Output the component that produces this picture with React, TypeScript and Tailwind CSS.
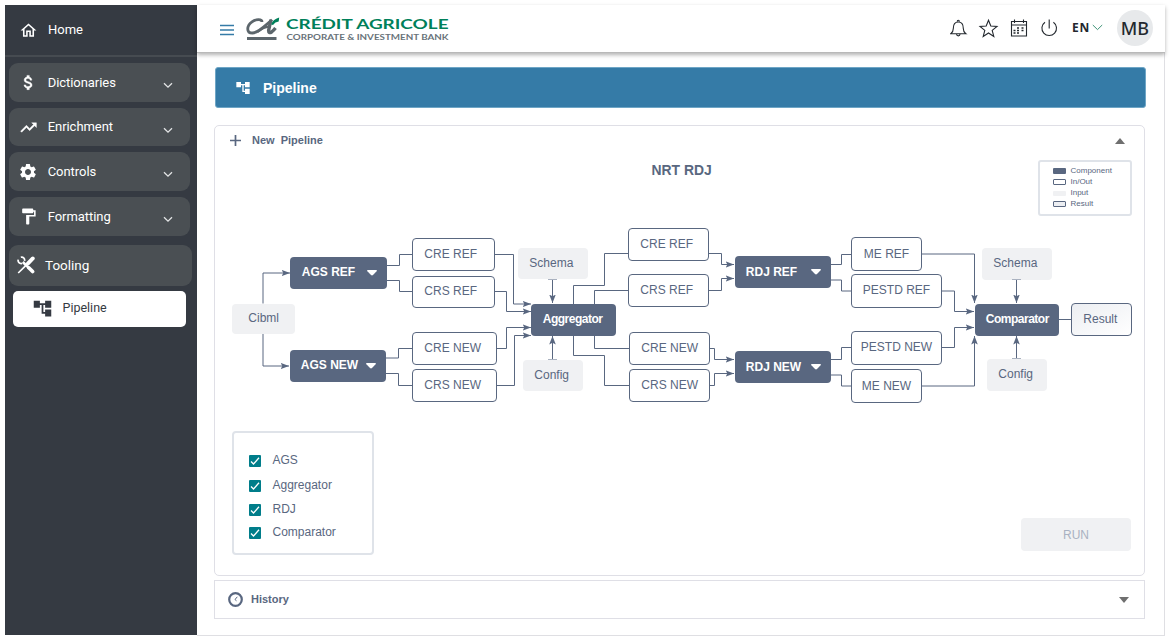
import type { ReactNode } from "react";
import { MdAccountTree, MdFormatPaint, MdOutlineHome, MdSettings } from "react-icons/md";

type Kind = "component" | "inout" | "input" | "result";

interface DiagramNode {
  label: string;
  kind: Kind;
  x: number;
  y: number;
  w: number;
  h: number;
  textX: number;
  baseline: number;
  tight?: boolean;
  caretX?: number;
}

// Origin of the diagram canvas in page units.
const OX = 215;
const OY = 216;

const nodes: DiagramNode[] = [
  { label: "Cibml", kind: "input", x: 231.5, y: 303.5, w: 63, h: 30.5, textX: 248, baseline: 322 },
  { label: "AGS REF", kind: "component", x: 290, y: 257, w: 97, h: 32, textX: 301.5, baseline: 276, caretX: 367 },
  { label: "AGS NEW", kind: "component", x: 289.5, y: 350, w: 96.5, h: 32, textX: 300.5, baseline: 369, caretX: 366 },
  { label: "CRE REF", kind: "inout", x: 412, y: 238, w: 83, h: 33, textX: 424, baseline: 258 },
  { label: "CRS REF", kind: "inout", x: 412, y: 275.5, w: 83, h: 32.5, textX: 424, baseline: 295 },
  { label: "CRE NEW", kind: "inout", x: 412, y: 332, w: 85, h: 33, textX: 424, baseline: 352 },
  { label: "CRS NEW", kind: "inout", x: 412, y: 369, w: 85, h: 33, textX: 424, baseline: 389 },
  { label: "Schema", kind: "input", x: 517.5, y: 247.5, w: 70, h: 31.5, textX: 529, baseline: 267 },
  { label: "Aggregator", kind: "component", x: 531, y: 303.5, w: 85, h: 32, textX: 542.5, baseline: 323, tight: true },
  { label: "Config", kind: "input", x: 522.5, y: 359.5, w: 60, h: 31.5, textX: 534, baseline: 379 },
  { label: "CRE REF", kind: "inout", x: 628, y: 228, w: 81, h: 33, textX: 640, baseline: 248 },
  { label: "CRS REF", kind: "inout", x: 628, y: 274, w: 81, h: 33, textX: 640, baseline: 294 },
  { label: "CRE NEW", kind: "inout", x: 629, y: 332, w: 81, h: 33, textX: 641, baseline: 352 },
  { label: "CRS NEW", kind: "inout", x: 629, y: 369, w: 81, h: 33, textX: 641, baseline: 389 },
  { label: "RDJ REF", kind: "component", x: 734.5, y: 256, w: 96, h: 32, textX: 745.5, baseline: 276, caretX: 811 },
  { label: "RDJ NEW", kind: "component", x: 734.5, y: 351, w: 96, h: 32, textX: 745.5, baseline: 371, caretX: 811 },
  { label: "ME REF", kind: "inout", x: 851, y: 237, w: 71, h: 34, textX: 863.5, baseline: 258 },
  { label: "PESTD REF", kind: "inout", x: 851, y: 274, w: 91, h: 34, textX: 862.5, baseline: 294 },
  { label: "PESTD NEW", kind: "inout", x: 851, y: 330.5, w: 91, h: 34, textX: 860.5, baseline: 351 },
  { label: "ME NEW", kind: "inout", x: 851, y: 369, w: 71, h: 34, textX: 861.5, baseline: 390 },
  { label: "Schema", kind: "input", x: 981.5, y: 248, w: 70, h: 32, textX: 993, baseline: 267 },
  { label: "Comparator", kind: "component", x: 974.5, y: 303.5, w: 84, h: 32, textX: 985.5, baseline: 323, tight: true },
  { label: "Config", kind: "input", x: 986.5, y: 359, w: 60, h: 31.5, textX: 998, baseline: 378 },
  { label: "Result", kind: "result", x: 1071, y: 303, w: 61, h: 33, textX: 1083, baseline: 323 },
];

const kindClass: Record<Kind, string> = {
  component: "bg-[#596780] text-white font-bold",
  inout: "bg-white border border-[#596780] text-[#596780]",
  input: "bg-[#f0f1f3] text-[#596780]",
  result: "bg-linear-to-br from-[#eceef2] to-white border border-[#596780] text-[#596780]",
};

const plainEdges = [
  "M387 265.5H399.5V254.5H412",
  "M387 280.5H399.5V291.5H412",
  "M386 358H398.5V348.5H412",
  "M386 373.5H398.5V385.5H412",
  "M573.5 304V285.5H604.5V253.5H628",
  "M594.5 304V290.5H628",
  "M594.5 335V348.5H629",
  "M573.5 335V355.5H604.5V385.5H629",
  "M830 264.5H841.5V254.5H851",
  "M830 280H841.5V291H851",
  "M830 359.5H841.5V347.5H851",
  "M830 375H841.5V386H851",
  "M1058 319.5H1071",
];

const capEdges = ["M548 279.5H557", "M548 359.5H557", "M1012 279.5H1021", "M1012 358.5H1021"];

const arrowEdges = [
  "M263 303.5V273H290",
  "M263 334V366H289",
  "M495 254.5H513.5V304H531",
  "M495 291.5H506.5V311.5H531",
  "M497 348.5H506.5V327.5H531",
  "M497 385.5H514.5V335.5H531",
  "M552.5 279V303",
  "M552.5 359V336",
  "M709 253.5H721.5V264.5H734",
  "M709 290.5H721.5V278.5H734",
  "M710 348.5H714.5V359.5H734",
  "M710 385.5H714.5V373.5H734",
  "M922 254H974.5V303",
  "M942 291H954.5V311.5H974",
  "M942 347.5H954.5V327.5H974",
  "M922 386H974.5V336",
  "M1016.5 279V303",
  "M1016.5 359V336",
];

function NodeBox({ node }: { node: DiagramNode }) {
  const bordered = node.kind === "inout" || node.kind === "result" ? 1 : 0;
  return (
    <div
      className={`absolute rounded-[4px] text-[12px] leading-[16px] whitespace-nowrap ${kindClass[node.kind]} ${
        node.tight ? "tracking-[-0.5px]" : ""
      }`}
      style={{
        left: node.x - OX,
        top: node.y - OY,
        width: node.w,
        height: node.h,
        paddingLeft: node.textX + 0.3 - node.x - bordered,
        paddingTop: node.baseline - 12 - node.y - bordered,
      }}
    >
      {node.label}
      {node.caretX !== undefined && (
        <svg
          className="absolute"
          style={{ left: node.caretX + 0.3 - node.x, top: 13 }}
          width="10"
          height="6"
          viewBox="0 0 10 6"
        >
          <path d="M.6 0h8.8q.8.5.2 1.3L6 5q-1 .9-2 0L.4 1.3Q-.2.5.6 0z" fill="#fff" />
        </svg>
      )}
    </div>
  );
}

function Diagram() {
  return (
    <div className="relative h-[215px]">
      <svg className="absolute inset-0" width="929" height="215" viewBox="215 216 929 215">
        <defs>
          <marker id="arrow" markerUnits="userSpaceOnUse" markerWidth="9" markerHeight="8" refX="8.5" refY="4" orient="auto">
            <path d="M0 .7 8.5 4 0 7.3 1.8 4z" fill="#596780" />
          </marker>
        </defs>
        <g fill="none" stroke="#596780" strokeWidth="1">
          {plainEdges.map((d) => (
            <path key={d} d={d} />
          ))}
          {arrowEdges.map((d) => (
            <path key={d} d={d} markerEnd="url(#arrow)" />
          ))}
        </g>
      </svg>
      {nodes.map((n) => (
        <NodeBox key={`${n.label}-${n.x}-${n.y}`} node={n} />
      ))}
      <svg className="absolute inset-0" width="929" height="215" viewBox="215 216 929 215">
        {capEdges.map((d) => (
          <path key={d} d={d} stroke="#aab2c0" />
        ))}
      </svg>
    </div>
  );
}

function Chevron() {
  return (
    <svg width="10" height="7" viewBox="0 0 10 7" fill="none" stroke="#e3e5e6" strokeWidth="1.3">
      <path d="M1 1.2 5 5.2 9 1.2" />
    </svg>
  );
}

function BoldIcon({ d, size, weight }: { d: string; size: number; weight: number }) {
  return (
    <svg width={size} height={size} viewBox="0 0 24 24" fill="#fff" stroke="#fff" strokeWidth={weight} className="shrink-0">
      <path d={d} />
    </svg>
  );
}

const DOLLAR =
  "M11.8 10.9c-2.27-.59-3-1.2-3-2.15 0-1.09 1.01-1.85 2.7-1.85 1.78 0 2.44.85 2.5 2.1h2.21c-.07-1.72-1.12-3.3-3.21-3.81V3h-3v2.16c-1.94.42-3.5 1.68-3.5 3.61 0 2.31 1.91 3.46 4.7 4.13 2.5.6 3 1.48 3 2.41 0 .69-.49 1.79-2.7 1.79-2.06 0-2.87-.92-2.98-2.1h-2.2c.12 2.19 1.76 3.42 3.68 3.83V21h3v-2.15c1.95-.37 3.5-1.5 3.5-3.55 0-2.84-2.43-3.81-4.7-4.4z";
const TREND = "M16 6l2.29 2.29-4.88 4.88-4-4L2 16.59 3.41 18l6-6 4 4 6.3-6.29L22 12V6z";

function ToolsIcon() {
  return (
    <svg width="18" height="18" viewBox="0 0 18 18" fill="none" stroke="#fff">
      <path d="M1.200 3.600C.6 6 2.600 8 5 7.400M3.800 1.300C6 .6 8 2.400 7.600 4.800" strokeWidth="1.700" />
      <path d="M5.800 6 12.500 12.700" strokeWidth="2.600" />
      <path d="M11.800 11.800 15.600 15.600" strokeWidth="3.600" strokeLinecap="round" />
      <path d="M15.800 2.400 10.800 7.600" strokeWidth="3.800" strokeLinecap="round" />
      <path d="M10.500 7.800 1.200 17" strokeWidth="1.700" />
    </svg>
  );
}

function MenuItem({ icon, label }: { icon: ReactNode; label: string }) {
  return (
    <div className="flex h-[38.7px] items-center rounded-[9px] bg-[#4a4f53] pr-[17px] pl-[10px]">
      <span className="flex w-[18px] justify-center">{icon}</span>
      <span className="ml-[10.7px] flex-1 text-[13px] tracking-[-0.05px]">{label}</span>
      <span className="pt-[6px]">
        <Chevron />
      </span>
    </div>
  );
}

function Sidebar() {
  return (
    <aside className="h-[630px] w-[192px] shrink-0 bg-[#353a42] font-['Roboto',sans-serif] text-white">
      <div className="flex h-[52px] items-center border-b-2 border-[#464b51] pl-[14px]">
        <MdOutlineHome size={19} />
        <span className="ml-[10px] text-[13px]">Home</span>
      </div>
      <nav className="pt-[6px] pl-[4px]">
        <div className="flex w-[181px] flex-col gap-[6px]">
          <MenuItem icon={<BoldIcon d={DOLLAR} size={19} weight={0.5} />} label="Dictionaries" />
          <MenuItem icon={<BoldIcon d={TREND} size={19} weight={0.5} />} label="Enrichment" />
          <MenuItem icon={<MdSettings size={20} className="shrink-0" />} label="Controls" />
          <MenuItem icon={<MdFormatPaint size={19} className="shrink-0" />} label="Formatting" />
        </div>
        <div className="mt-[9px] flex h-[41px] w-[183px] items-center rounded-[9px] bg-[#4a4f53] pl-[8px]">
          <ToolsIcon />
          <span className="ml-[10px] text-[13.5px]">Tooling</span>
        </div>
        <div className="mt-[5px] ml-[4px] flex h-[36px] w-[173px] items-center rounded-[5px] bg-white pb-[1px] pl-[19px] text-[#353a42]">
          <MdAccountTree size={21} className="mt-[1px]" />
          <span className="ml-[9.5px] text-[12.5px]">Pipeline</span>
        </div>
      </nav>
    </aside>
  );
}

function Logo() {
  return (
    <svg width="204" height="30" viewBox="245 13 204 30">
      <g fill="none" stroke="#5c666c">
        <path d="M262 22C262 19 256 19 252 21.800C246.500 25.800 246 33 252.500 33C258 33 263.500 27 272 19.800" strokeWidth="2.800" />
        <path d="M271 19.600 268.600 30.500Q268.600 33.800 271.600 32Q273.700 30.300 275.500 28" strokeWidth="3.400" />
        <path d="M257.500 32Q263 26.600 271 26.600" strokeWidth="2.200" />
      </g>
      <path d="M271.200 24.600Q272.500 19.400 279.200 17.500L278.700 21.500Q275 22 273 24.900z" fill="#00805a" />
      <path d="M247 37h29.500v3H247z" fill="#5c666c" />
      <text x="286" y="29.200" textLength="162.500" lengthAdjust="spacingAndGlyphs" fontFamily="Lato, sans-serif" fontWeight="700" fontSize="13.500" fill="#00805a">
        CRÉDIT AGRICOLE
      </text>
      <text x="286.500" y="40" textLength="162" lengthAdjust="spacingAndGlyphs" fontFamily="Lato, sans-serif" fontWeight="700" fontSize="8.200" fill="#69737a">
        CORPORATE &amp; INVESTMENT BANK
      </text>
    </svg>
  );
}

function HeaderIcons() {
  return (
    <svg width="108" height="20" viewBox="950 18 108 20" fill="none" stroke="#23282e" strokeWidth="1.1">
      <path d="M950.800 33.700h15q-2.500-1.700-2.500-5.200c0-4.500-1.500-6.500-5-6.500s-5 2-5 6.500q0 3.500-2.500 5.200zM957.200 21.500q0-1.200 1.100-1.200t1.100 1.200M956.500 34q.2 1.900 1.800 1.900t1.800-1.900" />
      <path d="M988.500 20.200l2.300 5.800 6.200.4-4.800 4 1.600 6-5.300-3.400-5.300 3.400 1.600-6-4.800-4 6.200-.4z" />
      <path d="M1011.500 21.500h15v14.500h-15zM1011.500 25h15M1014.500 19.500v3.500M1023.500 19.500v3.500" />
      <path d="M1017 28h2m2.500 0h2M1013.500 30.500h2m1.500 0h2m2.500 0h2M1013.500 33h2m1.500 0h2" strokeWidth="1.700" />
      <path d="M1045 22.300a7.300 7.300 0 1 0 8.400 0M1049.200 19.500v9" />
    </svg>
  );
}

function Header() {
  return (
    <header className="relative z-10 flex h-[48px] items-center border-b border-[#b9b9b9] bg-white pl-[23px] shadow-[0_2px_4px_rgba(0,0,0,0.3)]">
      <svg width="14" height="12" viewBox="0 0 14 12" className="mt-[2px] shrink-0">
        <path d="M0 1.500h14M0 6h14M0 10.500h14" stroke="#357ba7" strokeWidth="1.300" />
      </svg>
      <div className="ml-[11px] pb-[2px]">
        <Logo />
      </div>
      <div className="ml-auto flex items-center pr-[12px] pb-[1px]">
        <span className="pb-[1px]">
          <HeaderIcons />
        </span>
        <span className="ml-[14px] pb-[1px] font-['Open_Sans',sans-serif] text-[12px] font-bold tracking-[0.7px] text-[#23282e]">EN</span>
        <svg width="11" height="7" viewBox="0 0 11 7" className="mb-[1px] ml-[2px]" fill="none" stroke="#3f9377">
          <path d="M.8 1 5.500 5.600 10.200 1" />
        </svg>
        <span className="ml-[14px] flex size-[36px] items-center justify-center rounded-full bg-[#e7e9eb] font-['Noto_Sans',sans-serif] text-[18px] font-medium text-[#23282e]">
          MB
        </span>
      </div>
    </header>
  );
}

function Legend() {
  const rows = [
    { label: "Component", swatch: "h-[6px] bg-[#596780]" },
    { label: "In/Out", swatch: "h-[6px] border border-[#596780]" },
    { label: "Input", swatch: "h-[5px] bg-[#f0f1f3]" },
    { label: "Result", swatch: "h-[6px] border border-[#596780] bg-[#eceef2]" },
  ];
  return (
    <div className="mt-[4px] h-[56px] w-[94px] rounded-[3px] border-2 border-[#dfe3e9] pt-[3px] pl-[13px]">
      {rows.map((r) => (
        <div key={r.label} className="flex h-[11px] items-center">
          <span className={`mt-[1px] w-[13px] rounded-[1px] ${r.swatch}`} />
          <span className="ml-[4.5px] text-[8px] leading-[11px]">{r.label}</span>
        </div>
      ))}
    </div>
  );
}

function CheckList() {
  const items = [
    { label: "AGS", gap: "mt-[19px]" },
    { label: "Aggregator", gap: "mt-[9px]" },
    { label: "RDJ", gap: "mt-[8px]" },
    { label: "Comparator", gap: "mt-[7px]" },
  ];
  return (
    <div className="h-[124px] w-[142px] rounded-[4px] border-2 border-[#dfe3e9] pl-[15px]">
      {items.map((item) => (
        <div key={item.label} className={`flex h-[16px] items-center ${item.gap}`}>
          <svg width="12" height="12" viewBox="0 0 12 12" className="mt-[1px]">
            <rect width="12" height="12" rx="1" fill="#007d8a" />
            <path d="M2 6.500 4.500 9 10 2.800" fill="none" stroke="#fff" strokeWidth="1.300" />
          </svg>
          <span className="ml-[12px] text-[12px] leading-[16px]">{item.label}</span>
        </div>
      ))}
    </div>
  );
}

export default function App() {
  return (
    <div className="flex h-[642px] w-[1171px] overflow-hidden bg-white pt-[5px] pl-[5px] font-['Liberation_Sans',Arial,sans-serif] text-[#596780]">
      <Sidebar />
      <div className="flex h-[631px] w-[968px] flex-col">
        <Header />
        <main className="flex flex-1 flex-col border-r border-b border-[#dfdfe3] pt-[14px] pr-[18px] pl-[17px]">
          <div className="ml-[1px] flex h-[41px] w-[931px] shrink-0 items-center rounded-[3px] border border-[#6fa6c6] bg-[#357ba7] pl-[19px] text-white">
            <MdAccountTree size={16} />
            <span className="ml-[12px] text-[14px] leading-[16px] font-bold">Pipeline</span>
          </div>
          <section className="mt-[17px] flex h-[451px] w-[931px] shrink-0 flex-col rounded-[5px] border border-[#dfdfe6]">
            <div className="flex h-[30px] shrink-0 items-center pr-[19px] pb-[2px] pl-[15px]">
              <svg width="11" height="11" viewBox="0 0 11 11" className="mt-[1px]">
                <path d="M5.500 0v11M0 5.500h11" stroke="#596780" strokeWidth="1.700" />
              </svg>
              <span className="ml-[11px] text-[11px] leading-[14px] font-bold whitespace-pre">New  Pipeline</span>
              <svg width="10" height="6" viewBox="0 0 10 6" className="mt-[2px] ml-auto">
                <path d="M5 0 10 6H0z" fill="#6f6f6f" />
              </svg>
            </div>
            <div className="grid h-[60px] shrink-0 grid-cols-[823px_94px]">
              <h1 className="pt-[6px] pl-[436.500px] text-[13.900px] leading-[16px] font-bold">NRT RDJ</h1>
              <Legend />
            </div>
            <Diagram />
            <div className="flex justify-between pr-[13px] pl-[16.500px]">
              <CheckList />
              <button className="mt-[87px] h-[33px] w-[110px] rounded-[4px] bg-[#f0f1f3] text-[12px] text-[#a9b1c1]">RUN</button>
            </div>
          </section>
          <section className="mt-[4px] flex h-[39px] w-[931px] shrink-0 items-center border border-[#dfdfe6] pr-[15px] pl-[13px]">
            <svg width="15" height="15" viewBox="0 0 15 15" fill="none" stroke="#596780" className="shrink-0">
              <circle cx="7.500" cy="7.500" r="6.300" strokeWidth="2.200" />
              <path d="M9.300 4.800 7 7.500l1.500 1.300" strokeWidth="1" />
            </svg>
            <span className="ml-[8px] pb-[2px] text-[11px] leading-[14px] font-bold">History</span>
            <svg width="10" height="6" viewBox="0 0 10 6" className="ml-auto">
              <path d="M0 0h10L5 6z" fill="#6f6f6f" />
            </svg>
          </section>
        </main>
      </div>
    </div>
  );
}
